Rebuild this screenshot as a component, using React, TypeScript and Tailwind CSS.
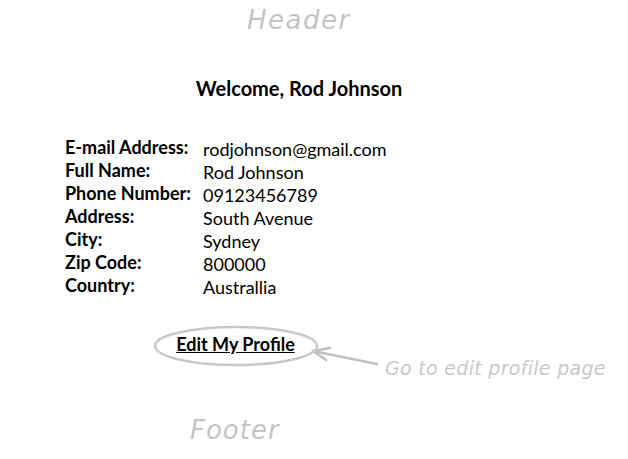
import { FC } from 'react';

const rows: [string, string][] = [
  ['E-mail Address:', 'rodjohnson@gmail.com'],
  ['Full Name:', 'Rod Johnson'],
  ['Phone Number:', '09123456789'],
  ['Address:', 'South Avenue'],
  ['City:', 'Sydney'],
  ['Zip Code:', '800000'],
  ['Country:', 'Australlia'],
];

const sans = { fontFamily: 'Lato, "Open Sans", sans-serif' };
const hand = { fontFamily: '"DejaVu Sans", sans-serif' };

const App: FC = () => {
  return (
    <div className="w-[628px] h-[459px] bg-white text-black overflow-hidden" style={sans}>
      <div className="pl-[247px] h-[38px]">
        <span className="text-[26px] leading-[40px] italic text-[#c4c4c4] tracking-[1.5px]" style={hand}>
          Header
        </span>
      </div>

      <h1 className="text-center font-bold text-[20px] leading-[30px] mt-[35px] pr-[30px]">Welcome, Rod Johnson</h1>

      <div className="mt-[34px] ml-[65px] flex flex-col">
        {rows.map(([label, value]) => (
          <div key={label} className="flex h-[23px] items-start">
            <span className="w-[138px] font-bold text-[18px] leading-[20px]">{label}</span>
            <span className="text-[18px] leading-[22px] mt-[1px]">{value}</span>
          </div>
        ))}
      </div>

      <div className="flex items-start mt-[27px] ml-[153px]">
        <div className="relative w-[166px] h-[42px] flex items-center justify-center">
          <svg className="absolute inset-0" width="166" height="42" viewBox="0 0 166 42">
            <ellipse cx="83" cy="21" rx="81" ry="19" fill="none" stroke="#c8c8c8" strokeWidth="2.5" />
          </svg>
          <a href="#" className="relative font-bold text-[18px] leading-[22px] underline mt-[-4px] ml-[-1px]">
            Edit My Profile
          </a>
        </div>
        <svg width="70" height="26" viewBox="0 0 70 26" className="mt-[17px] ml-[-9px] shrink-0">
          <g stroke="#c0c0c0" strokeWidth="2.5" fill="none" strokeLinecap="round">
            <line x1="3" y1="9" x2="67" y2="22" />
            <line x1="3" y1="9" x2="20" y2="6" />
            <line x1="3" y1="9" x2="16" y2="18" />
          </g>
        </svg>
        <span className="text-[19px] leading-[22px] italic text-[#c8c8c8] ml-[5px] mt-[32px] tracking-[0.3px] whitespace-nowrap" style={hand}>
          Go to edit profile page
        </span>
      </div>

      <div className="mt-[36px] ml-[190px]">
        <span className="text-[26px] leading-[30px] italic text-[#c4c4c4] tracking-[1px]" style={hand}>
          Footer
        </span>
      </div>
    </div>
  );
};

export default App;
